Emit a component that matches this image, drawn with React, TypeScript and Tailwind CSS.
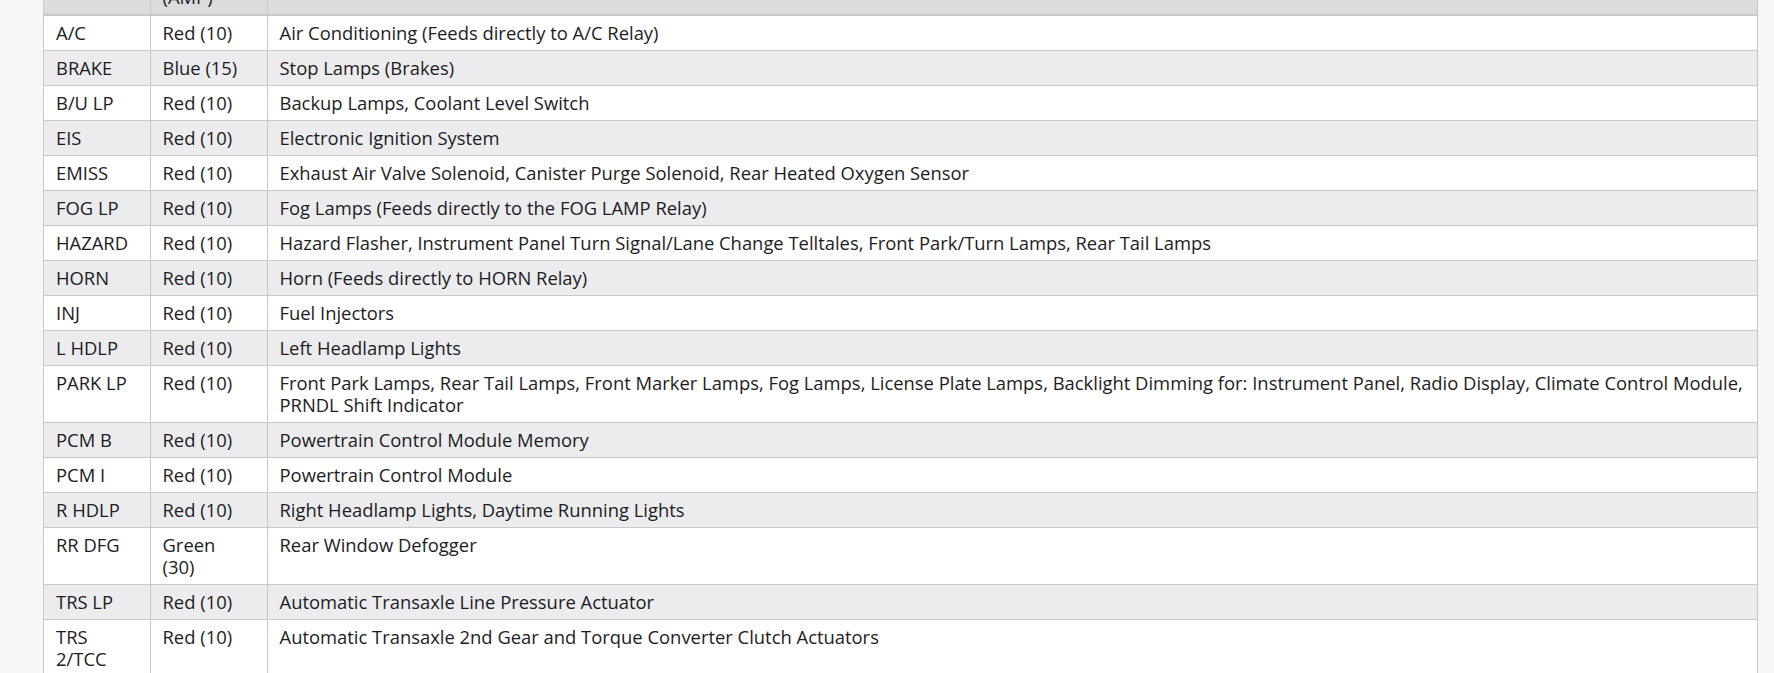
const rows: [string, string, string][] = [
  ["A/C", "Red (10)", "Air Conditioning (Feeds directly to A/C Relay)"],
  ["BRAKE", "Blue (15)", "Stop Lamps (Brakes)"],
  ["B/U LP", "Red (10)", "Backup Lamps, Coolant Level Switch"],
  ["EIS", "Red (10)", "Electronic Ignition System"],
  ["EMISS", "Red (10)", "Exhaust Air Valve Solenoid, Canister Purge Solenoid, Rear Heated Oxygen Sensor"],
  ["FOG LP", "Red (10)", "Fog Lamps (Feeds directly to the FOG LAMP Relay)"],
  ["HAZARD", "Red (10)", "Hazard Flasher, Instrument Panel Turn Signal/Lane Change Telltales, Front Park/Turn Lamps, Rear Tail Lamps"],
  ["HORN", "Red (10)", "Horn (Feeds directly to HORN Relay)"],
  ["INJ", "Red (10)", "Fuel Injectors"],
  ["L HDLP", "Red (10)", "Left Headlamp Lights"],
  [
    "PARK LP",
    "Red (10)",
    "Front Park Lamps, Rear Tail Lamps, Front Marker Lamps, Fog Lamps, License Plate Lamps, Backlight Dimming for: Instrument Panel, Radio Display, Climate Control Module, PRNDL Shift Indicator",
  ],
  ["PCM B", "Red (10)", "Powertrain Control Module Memory"],
  ["PCM I", "Red (10)", "Powertrain Control Module"],
  ["R HDLP", "Red (10)", "Right Headlamp Lights, Daytime Running Lights"],
  ["RR DFG", "Green (30)", "Rear Window Defogger"],
  ["TRS LP", "Red (10)", "Automatic Transaxle Line Pressure Actuator"],
  ["TRS 2/TCC", "Red (10)", "Automatic Transaxle 2nd Gear and Torque Converter Clutch Actuators"],
  ["TRS 1", "Red (10)", "Automatic Transaxle 1st Gear Actuator"],
];

export default function App() {
  return (
    <div className="w-[1774px] h-[673px] overflow-hidden bg-[#f6f6f6] font-['Open_Sans',sans-serif] text-[18.4px] leading-[22px] text-[#1c1c24]">
      {/* page is scrolled: header row mostly above the viewport */}
      <div className="ml-[43px] w-[1715px] -mt-[42px] border-x border-[#c8c8c8]">
        <table className="w-full border-collapse table-fixed">
          <colgroup>
            <col className="w-[106px]" />
            <col className="w-[117px]" />
            <col />
          </colgroup>
          <thead>
            <tr className="bg-[#dcdcdc]">
              <th className="px-[12px] py-[6px] text-left align-top font-normal border-r border-b-2 border-[#c8c8c8]">Fuse</th>
              <th className="pl-[12px] pr-[20px] py-[6px] text-left align-top font-normal border-r border-b-2 border-[#c8c8c8]">Color (AMP)</th>
              <th className="px-[12px] py-[6px] text-left align-top font-normal border-b-2 border-[#c8c8c8]">Usage</th>
            </tr>
          </thead>
          <tbody>
            {rows.map(([fuse, color, usage], i) => (
              <tr key={fuse} className={i % 2 === 0 ? "bg-white" : "bg-[#ececee]"}>
                <td className="px-[12px] py-[6px] align-top border-r border-b border-[#c8c8c8]">{fuse}</td>
                <td className="pl-[12px] pr-[20px] py-[6px] align-top border-r border-b border-[#c8c8c8]">{color}</td>
                <td className="px-[12px] py-[6px] align-top border-b border-[#c8c8c8]">{usage}</td>
              </tr>
            ))}
          </tbody>
        </table>
      </div>
    </div>
  );
}
